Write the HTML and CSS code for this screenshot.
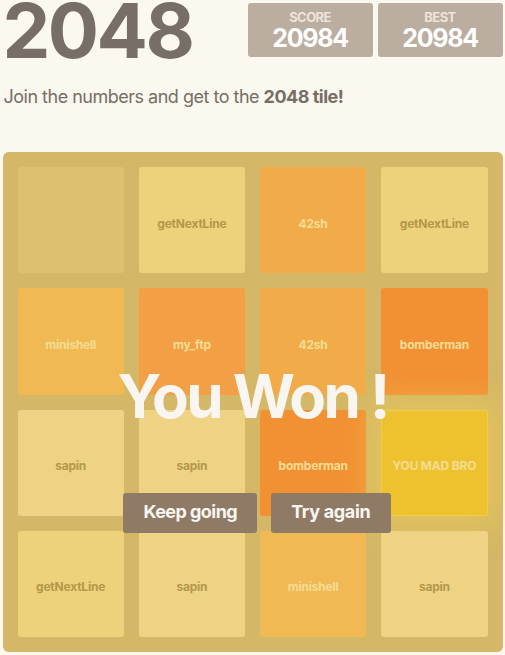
FILE: index.html
```html
<!DOCTYPE html>
<html>
<head>
<meta charset="utf-8">
<title>2048</title>
<link rel="stylesheet" href="styles.css">
</head>
<body>
<div class="container">
  <div class="heading">
    <h1 class="title">2048</h1>
    <div class="scores">
      <div class="score-box"><span class="score-label">Score</span><span class="score-value">20984</span></div>
      <div class="score-box"><span class="score-label">Best</span><span class="score-value">20984</span></div>
    </div>
  </div>
  <p class="intro">Join the numbers and get to the <strong>2048 tile!</strong></p>

  <div class="board">
    <div class="cell"></div>
    <div class="cell t4">getNextLine</div>
    <div class="cell t16">42sh</div>
    <div class="cell t4">getNextLine</div>

    <div class="cell t8">minishell</div>
    <div class="cell t32">my_ftp</div>
    <div class="cell t16">42sh</div>
    <div class="cell t64">bomberman</div>

    <div class="cell t2">sapin</div>
    <div class="cell t2">sapin</div>
    <div class="cell t64">bomberman</div>
    <div class="cell t2048">YOU MAD BRO</div>

    <div class="cell t4">getNextLine</div>
    <div class="cell t2">sapin</div>
    <div class="cell t8">minishell</div>
    <div class="cell t2">sapin</div>

    <div class="message">
      <p class="message-text">You Won !</p>
      <div class="lower">
        <a class="btn btn-keep">Keep going</a>
        <a class="btn">Try again</a>
      </div>
    </div>
  </div>
</div>
</body>
</html>
```
FILE: styles.css
```css
html, body {
  margin: 0;
  padding: 0;
}
body {
  background: #faf8ef;
  color: #776e65;
  font-family: Inter, "Noto Sans", sans-serif;
  font-size: 18px;
}
.container {
  width: 500px;
  margin: 0 auto;
}
.heading {
  display: flex;
  justify-content: space-between;
  align-items: flex-start;
  height: 60px;
}
.title {
  margin: 0;
  font-size: 76px;
  line-height: 60px;
  font-weight: bold;
  letter-spacing: -2.5px;
  color: #776e65;
}
.scores {
  display: flex;
  gap: 5px;
  margin-top: 3px;
}
.score-box {
  box-sizing: border-box;
  width: 125px;
  height: 54px;
  padding-top: 8px;
  background: #bbada0;
  border-radius: 3px;
  display: flex;
  flex-direction: column;
  align-items: center;
  font-weight: bold;
}
.score-label {
  font-size: 13px;
  line-height: 13px;
  text-transform: uppercase;
  color: #eee4da;
  letter-spacing: -0.6px;
  margin-bottom: 2px;
}
.score-value {
  font-size: 25px;
  line-height: 25px;
  color: #ffffff;
  letter-spacing: -1.3px;
}
.intro {
  margin: 16px 0 0 1px;
  line-height: 42px;
  letter-spacing: -0.5px;
}
.intro strong {
  font-weight: bold;
}
.board {
  position: relative;
  margin-top: 34px;
  box-sizing: border-box;
  width: 500px;
  height: 500px;
  padding: 15px;
  background: #bbada0;
  border-radius: 6px;
  display: grid;
  grid-template-columns: repeat(4, 1fr);
  grid-template-rows: repeat(4, 1fr);
  gap: 15px;
}
.cell {
  border-radius: 3px;
  background: rgba(238, 228, 218, 0.35);
  display: flex;
  align-items: center;
  justify-content: center;
  font-size: 12px;
  font-weight: bold;
  letter-spacing: -0.2px;
  padding-top: 6px;
  box-sizing: border-box;
}
.t2 { background: #eee4da; color: #776e65; }
.t4 { background: #ede0c8; color: #776e65; }
.t8 { background: #f2b179; color: #f9f6f2; }
.t16 { background: #f59563; color: #f9f6f2; }
.t32 { background: #f67c5f; color: #f9f6f2; }
.t64 { background: #f65e3b; color: #f9f6f2; }
.t2048 {
  background: #edc22e;
  color: #f9f6f2;
  box-shadow: 0 0 30px 10px rgba(243, 215, 116, 0.55556), inset 0 0 0 1px rgba(255, 255, 255, 0.33333);
}
.message {
  position: absolute;
  inset: 0;
  border-radius: 6px;
  background: rgba(237, 194, 46, 0.5);
  color: #f9f6f2;
  text-align: center;
}
.message-text {
  margin: 214px 0 0;
  font-size: 60px;
  line-height: 60px;
  height: 60px;
  font-weight: bold;
  letter-spacing: -2.6px;
}
.lower {
  margin-top: 67px;
  display: flex;
  justify-content: center;
  gap: 5px;
}
.btn {
  margin-left: 9px;
  height: 40px;
  line-height: 37px;
  padding: 0 20px;
  background: #8f7a66;
  border-radius: 3px;
  color: #f9f6f2;
  font-size: 18px;
  font-weight: bold;
  letter-spacing: -0.3px;
  text-decoration: none;
}
.btn-keep {
  letter-spacing: -0.55px;
}
```
